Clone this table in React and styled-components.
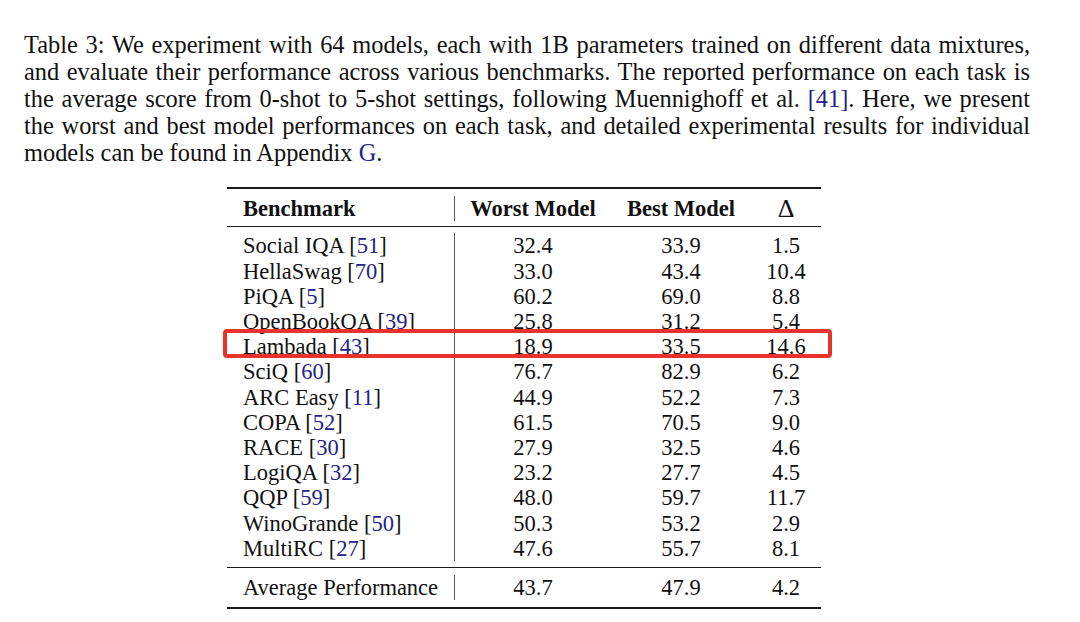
import React from "react";
import styled, { createGlobalStyle } from "styled-components";

const Global = createGlobalStyle`
  html, body { margin: 0; padding: 0; background: #ffffff; }
  body { width: 1080px; height: 622px; overflow: hidden; }
`;

const Page = styled.div`
  width: 1080px;
  height: 622px;
  background: #ffffff;
  color: #111111;
  font-family: "Liberation Serif", "Times New Roman", serif;
  padding: 31px 50px 0 24px;
  box-sizing: border-box;
  display: flex;
  flex-direction: column;
`;

const Caption = styled.div`
  width: 1006px;
  font-size: 24.4px;
  line-height: 27px;
`;

const CapLine = styled.div`
  white-space: nowrap;
  text-align: ${(p) => (p.$last ? "left" : "justify")};
  text-align-last: ${(p) => (p.$last ? "left" : "justify")};
`;

const Ref = styled.span`
  color: #23238c;
`;

const Delta = styled.span`
  font-size: 26px;
  font-weight: 400;
`;

const TableWrap = styled.div`
  position: relative;
  margin: 21px 0 0 203px;
  width: 594px;
  font-size: 22.5px;
`;

const Rule = styled.div`
  height: ${(p) => (p.$thick ? "2px" : "1.3px")};
  background: #1a1a1a;
`;

const Section = styled.div`
  display: grid;
  grid-template-columns: 228px 156px 140px 70px;
  padding: ${(p) => p.$pad};
`;

const Cell = styled.div`
  height: 25.2px;
  line-height: 25.2px;
  white-space: nowrap;
  font-weight: ${(p) => (p.$bold ? 700 : 400)};
  text-align: ${(p) => (p.$first ? "left" : "center")};
  padding-left: ${(p) => (p.$first ? "16px" : "0")};
  border-right: ${(p) => (p.$first ? "1.3px solid #5a5a5a" : "none")};
  box-sizing: border-box;
`;

const Highlight = styled.div`
  position: absolute;
  left: -4px;
  top: 142px;
  width: 609px;
  height: 29px;
  border: 4px solid #e8322c;
  border-radius: 4px;
  box-sizing: border-box;
  pointer-events: none;
`;

const rows = [
  ["Social IQA", "51", "32.4", "33.9", "1.5"],
  ["HellaSwag", "70", "33.0", "43.4", "10.4"],
  ["PiQA", "5", "60.2", "69.0", "8.8"],
  ["OpenBookQA", "39", "25.8", "31.2", "5.4"],
  ["Lambada", "43", "18.9", "33.5", "14.6"],
  ["SciQ", "60", "76.7", "82.9", "6.2"],
  ["ARC Easy", "11", "44.9", "52.2", "7.3"],
  ["COPA", "52", "61.5", "70.5", "9.0"],
  ["RACE", "30", "27.9", "32.5", "4.6"],
  ["LogiQA", "32", "23.2", "27.7", "4.5"],
  ["QQP", "59", "48.0", "59.7", "11.7"],
  ["WinoGrande", "50", "50.3", "53.2", "2.9"],
  ["MultiRC", "27", "47.6", "55.7", "8.1"],
];

export default function App() {
  return (
    <>
      <Global />
      <Page>
        <Caption>
          <CapLine>Table 3: We experiment with 64 models, each with 1B parameters trained on different data mixtures,</CapLine>
          <CapLine>and evaluate their performance across various benchmarks. The reported performance on each task is</CapLine>
          <CapLine>
            the average score from 0-shot to 5-shot settings, following Muennighoff et al. <Ref>[41]</Ref>. Here, we present
          </CapLine>
          <CapLine>the worst and best model performances on each task, and detailed experimental results for individual</CapLine>
          <CapLine $last>
            models can be found in Appendix <Ref>G</Ref>.
          </CapLine>
        </Caption>
        <TableWrap>
          <Rule $thick />
          <Section $pad="7px 0 5px">
            <Cell $first $bold>Benchmark</Cell>
            <Cell $bold>Worst Model</Cell>
            <Cell $bold>Best Model</Cell>
            <Cell><Delta>Δ</Delta></Cell>
          </Section>
          <Rule />
          <Section $pad="6px 0 6px">
            {rows.map(([name, ref, w, b, d]) => (
              <React.Fragment key={name}>
                <Cell $first>
                  {name} [<Ref>{ref}</Ref>]
                </Cell>
                <Cell>{w}</Cell>
                <Cell>{b}</Cell>
                <Cell>{d}</Cell>
              </React.Fragment>
            ))}
          </Section>
          <Rule />
          <Section $pad="7px 0 7px">
            <Cell $first>Average Performance</Cell>
            <Cell>43.7</Cell>
            <Cell>47.9</Cell>
            <Cell>4.2</Cell>
          </Section>
          <Rule $thick />
          <Highlight />
        </TableWrap>
      </Page>
    </>
  );
}
